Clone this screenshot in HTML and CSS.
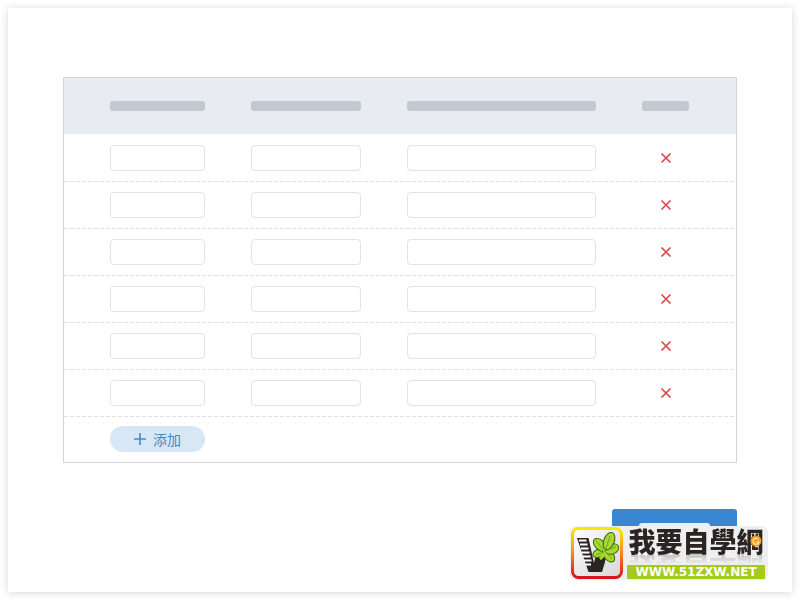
FILE: index.html
```
<!DOCTYPE html>
<html lang="zh">
<head>
  <meta charset="UTF-8" />
  <meta name="viewport" content="width=device-width, initial-scale=1.0" />
  <title>添加</title>
  <link rel="stylesheet" href="styles.css">
</head>
<body>
  <!-- Shared delete icon -->
  <svg class="sprite" aria-hidden="true">
    <symbol id="cross" viewBox="0 0 12 12">
      <path d="M1.5 1.5 10.5 10.5M10.5 1.5 1.5 10.5" fill="none" stroke="currentColor" stroke-width="1.7" />
    </symbol>
  </svg>

  <main class="card">
    <form class="form">
      <table class="table">
        <colgroup>
          <col class="col-short">
          <col class="col-medium">
          <col class="col-long">
          <col class="col-action">
        </colgroup>
        <thead>
          <tr>
            <th><div class="bar"></div></th>
            <th><div class="bar"></div></th>
            <th><div class="bar"></div></th>
            <th><div class="bar"></div></th>
          </tr>
        </thead>
        <tbody>
          <tr>
            <td><input type="text" aria-label="1-1"></td>
            <td><input type="text" aria-label="1-2"></td>
            <td><input type="text" aria-label="1-3"></td>
            <td><button type="button" class="delete" aria-label="×"><svg><use href="#cross" /></svg></button></td>
          </tr>
          <tr>
            <td><input type="text" aria-label="2-1"></td>
            <td><input type="text" aria-label="2-2"></td>
            <td><input type="text" aria-label="2-3"></td>
            <td><button type="button" class="delete" aria-label="×"><svg><use href="#cross" /></svg></button></td>
          </tr>
          <tr>
            <td><input type="text" aria-label="3-1"></td>
            <td><input type="text" aria-label="3-2"></td>
            <td><input type="text" aria-label="3-3"></td>
            <td><button type="button" class="delete" aria-label="×"><svg><use href="#cross" /></svg></button></td>
          </tr>
          <tr>
            <td><input type="text" aria-label="4-1"></td>
            <td><input type="text" aria-label="4-2"></td>
            <td><input type="text" aria-label="4-3"></td>
            <td><button type="button" class="delete" aria-label="×"><svg><use href="#cross" /></svg></button></td>
          </tr>
          <tr>
            <td><input type="text" aria-label="5-1"></td>
            <td><input type="text" aria-label="5-2"></td>
            <td><input type="text" aria-label="5-3"></td>
            <td><button type="button" class="delete" aria-label="×"><svg><use href="#cross" /></svg></button></td>
          </tr>
          <tr>
            <td><input type="text" aria-label="6-1"></td>
            <td><input type="text" aria-label="6-2"></td>
            <td><input type="text" aria-label="6-3"></td>
            <td><button type="button" class="delete" aria-label="×"><svg><use href="#cross" /></svg></button></td>
          </tr>
        </tbody>
        <tfoot>
          <tr>
            <td>
              <button type="button" class="add">
                <svg viewBox="0 0 12 12"><path d="M6 0V12M0 6H12" fill="none" stroke="currentColor" stroke-width="1.6" /></svg>
                添加
              </button>
            </td>
            <td colspan="3"></td>
          </tr>
        </tfoot>
      </table>

      <button type="submit" class="submit" aria-label="OK"><span class="submit-bar"></span></button>
    </form>
  </main>

  <!-- Site badge -->
  <div class="badge">
    <svg class="badge-logo" viewBox="0 0 52 52">
      <defs>
        <linearGradient id="ring" x1="0" y1="0" x2="0" y2="1">
          <stop offset="0" stop-color="#fde800" />
          <stop offset="0.5" stop-color="#f58a1f" />
          <stop offset="1" stop-color="#d9131e" />
        </linearGradient>
        <linearGradient id="plate" x1="0" y1="0" x2="1" y2="1">
          <stop offset="0" stop-color="#fff" />
          <stop offset="1" stop-color="#d6d6d8" />
        </linearGradient>
      </defs>
      <rect x="1.5" y="1.5" width="49" height="49" rx="6" fill="url(#plate)" stroke="url(#ring)" stroke-width="3" />
      <!-- Ladder and trunk -->
      <path d="M6 11H17.5L23 36 25 28 29 27 31 31 35 29 34 35 31 45H17.5Z" fill="#2c2422" />
      <path d="M8 13.500H15.500M9 17.500H16.500M10 21.500H17.500M11 25.500H18.500M12 29.500H19.500M13 33.500H20.500M14.500 37.500H20" stroke="#fff" stroke-width="2.200" />
      <!-- Leaves -->
      <g fill="#a8d82c" stroke="#356215" stroke-width="1">
        <ellipse cx="38" cy="29" rx="7" ry="4.500" transform="rotate(48 38 29)" />
        <ellipse cx="28" cy="26" rx="6.500" ry="4" transform="rotate(-24 28 26)" />
        <ellipse cx="29" cy="18" rx="8" ry="4.800" transform="rotate(44 29 18)" />
        <ellipse cx="41" cy="22" rx="7" ry="5" transform="rotate(-22 41 22)" />
        <ellipse cx="38" cy="14" rx="9" ry="5.200" transform="rotate(-68 38 14)" />
      </g>
      <path d="M29 32Q33 29 34 24" fill="none" stroke="#a8d82c" stroke-width="3" />
      <path d="M34 24 39 9M34 24 25 14M33 25 25 28M34 24 45 20M34 24 41 32" fill="none" stroke="#6aa81e" stroke-width="1" />
    </svg>
    <div class="badge-text">
      <div class="badge-name">
        <span class="badge-title">我要自學網</span>
        <svg class="badge-dot" viewBox="0 0 12 12">
          <circle cx="6" cy="6" r="5.500" fill="#f59b1c" />
          <path d="M8.500 4.500A3 3 0 1 0 9 7H6" fill="none" stroke="#fff0c8" stroke-width="1.200" />
        </svg>
      </div>
      <div class="badge-url">WWW.51ZXW.NET</div>
    </div>
  </div>
</body>
</html>
```
FILE: styles.css
```
* {
  margin: 0;
  padding: 0;
  box-sizing: border-box;
}

body {
  position: relative;
  min-height: 100vh;
  padding: 8px;
  display: flex;
  background-color: #fff;
  font-family: "Noto Sans CJK SC", sans-serif;
  font-size: 14px;
}

.sprite {
  position: absolute;
  width: 0;
  height: 0;
}

.card {
  flex: 1;
  padding: 69px 55px 40px;
  background-color: #fff;
  box-shadow: 0 1px 8px rgba(0, 0, 0, 0.16);
}

.form {
  display: flex;
  flex-direction: column;
  gap: 46px;
}

/* Table */
.table {
  width: 100%;
  table-layout: fixed;
  border: 1px solid #d3d6d9;
  border-spacing: 0;
}

.col-short {
  width: 24.4%;
}
.col-medium {
  width: 23.2%;
}
.col-long {
  width: 35%;
}

.table th {
  height: 56px;
  padding: 0 23px;
  background-color: #e8ecf1;
}
.table td {
  padding: 10px 23px;
  line-height: 0;
}
.table th:first-child,
.table td:first-child {
  padding-left: 46px;
}
.table th:last-child,
.table td:last-child {
  padding-right: 47px;
  text-align: center;
}

.table tbody tr {
  height: 47px;
}
.table tbody tr + tr,
.table tfoot tr {
  background: repeating-linear-gradient(to right, #dfe1e3 0 4px, transparent 4px 6px) left top / 100% 1px no-repeat;
}
.table tfoot td {
  height: 46px;
}

.bar {
  height: 10px;
  border-radius: 3px;
  background-color: #c1c8d0;
}

.table input {
  width: 100%;
  height: 26px;
  padding: 0 6px;
  border: 1px solid #e2e3e5;
  border-radius: 4px;
  background-color: #fff;
}

/* Buttons */
.delete {
  width: 26px;
  height: 26px;
  border: none;
  background: none;
  color: #d9484f;
  cursor: pointer;
}
.delete svg {
  width: 12px;
  height: 12px;
  vertical-align: middle;
}

.add {
  width: 100%;
  height: 26px;
  display: flex;
  align-items: center;
  justify-content: center;
  gap: 7px;
  border: none;
  border-radius: 13px;
  background-color: #d8e7f6;
  color: #4289c6;
  font: inherit;
  line-height: 26px;
  cursor: pointer;
}
.add svg {
  width: 12px;
  height: 12px;
}

.submit {
  align-self: flex-end;
  width: 125px;
  height: 38px;
  display: flex;
  align-items: center;
  justify-content: center;
  border: none;
  border-radius: 3px;
  background-color: #3986d3;
  cursor: pointer;
}
.submit-bar {
  width: 71px;
  height: 10px;
  border-radius: 3px;
  background-color: #e6f1fb;
}

/* Badge over the page corner */
.badge {
  position: absolute;
  right: 32px;
  bottom: 20px;
  display: flex;
  gap: 4px;
  padding: 1px 3px 1px 1px;
  border-radius: 6px;
  background-color: #efeff0;
}
.badge-logo {
  width: 52px;
  height: 52px;
}
.badge-text {
  width: 138px;
  display: flex;
  flex-direction: column;
  justify-content: space-between;
}
.badge-name {
  position: relative;
}
.badge-title {
  display: block;
  color: #2a2423;
  font-family: "Noto Sans CJK TC", sans-serif;
  font-size: 27px;
  font-weight: 900;
  line-height: 28px;
  text-align: center;
  white-space: nowrap;
  -webkit-box-reflect: below -2px linear-gradient(transparent 60%, rgba(0, 0, 0, 0.25));
}
.badge-dot {
  position: absolute;
  top: 8px;
  right: 3px;
  width: 12px;
  height: 12px;
}
.badge-url {
  position: relative;
  height: 14px;
  background-color: #a4cb1c;
  color: #fff;
  font-family: "DejaVu Sans", sans-serif;
  font-size: 12px;
  font-weight: bold;
  line-height: 14px;
  text-align: center;
}
```
